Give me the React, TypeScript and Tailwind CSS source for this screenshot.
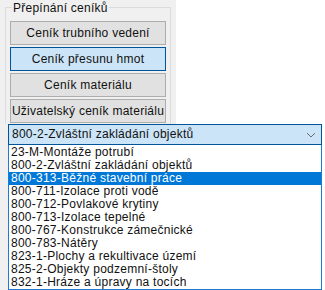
const items = [
  "23-M-Montáže potrubí",
  "800-2-Zvláštní zakládání objektů",
  "800-313-Běžné stavební práce",
  "800-711-Izolace proti vodě",
  "800-712-Povlakové krytiny",
  "800-713-Izolace tepelné",
  "800-767-Konstrukce zámečnické",
  "800-783-Nátěry",
  "823-1-Plochy a rekultivace území",
  "825-2-Objekty podzemní-štoly",
  "832-1-Hráze a úpravy na tocích",
];

const buttons = [
  { label: "Ceník trubního vedení", active: false },
  { label: "Ceník přesunu hmot", active: true },
  { label: "Ceník materiálu", active: false },
  { label: "Uživatelský ceník materiálu", active: false },
];

const selected = 2;

export default function App() {
  return (
    <div className="w-[325px] h-[290px] bg-white overflow-hidden text-[12px] leading-[13px] tracking-[0.25px] text-[#111] font-['Liberation_Sans',Arial,sans-serif]">
      {/* Group box */}
      <div className="flex h-[124px]">
        <div className="w-[176px] bg-[#f0f0f0] pl-[5px] pr-[5px] pt-[7px]">
          <div className="relative h-full border-l border-t border-r border-[#dcdcdc] px-[4px] pt-[13px]">
            <span className="absolute left-[6px] top-[-6px] bg-[#f0f0f0] px-[1px] leading-[13px]">
              Přepínání ceníků
            </span>
            <div className="flex flex-col gap-[2px]">
              {buttons.map((b) => (
                <div
                  key={b.label}
                  className={`h-[24px] flex items-center justify-center border ${
                    b.active ? "bg-[#cce4f7] border-[#005499]" : "bg-[#e1e1e1] border-[#adadad]"
                  }`}
                >
                  {b.label}
                </div>
              ))}
            </div>
          </div>
        </div>
        <div className="flex-1 bg-white" />
      </div>

      {/* Combo + dropdown */}
      <div className="flex h-[166px]">
        <div className="w-[8px] bg-[#f0f0f0]" />
        <div className="w-[314px] flex flex-col">
          <div className="h-[21px] flex items-center justify-between border border-[#005499] bg-[#cce4f7] pl-[3px] pr-[4px]">
            <span>800-2-Zvláštní zakládání objektů</span>
            <svg width="10" height="6" viewBox="0 0 10 6" className="mr-[1px]">
              <path d="M1 1 L5 5 L9 1" fill="none" stroke="#6d6d6d" strokeWidth="1" />
            </svg>
          </div>
          <div className="flex-1 border border-t-0 border-[#1e7bd4] bg-white pt-[1px]">
            {items.map((it, i) => (
              <div
                key={it}
                className={`h-[13px] pl-[2px] whitespace-nowrap ${
                  i === selected ? "bg-[#0078d7] text-white" : ""
                }`}
              >
                {it}
              </div>
            ))}
          </div>
        </div>
        <div className="flex-1 bg-white" />
      </div>
    </div>
  );
}
